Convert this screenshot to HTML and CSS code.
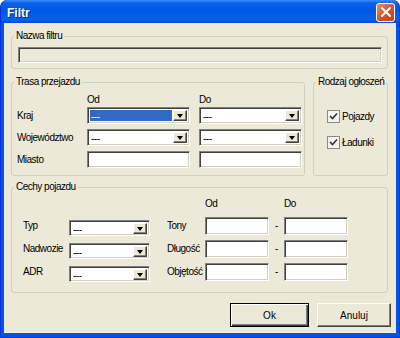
FILE: index.html
```html
<!DOCTYPE html>
<html>
<head>
    <title>Filtr</title>
    <link rel="stylesheet" href="styles.css">
</head>
<body>
    <div class="window">
        <div class="titlebar">
            <span class="title">Filtr</span>
            <button class="close" title="Zamknij">
                <svg width="10" height="10" viewBox="0 0 10 10">
                    <path d="M1 1L9 9M9 1L1 9" stroke="#fff" stroke-width="2" stroke-linecap="square"/>
                </svg>
            </button>
        </div>
        <div class="client">
            <fieldset class="group name-group">
                <legend>Nazwa filtru</legend>
                <input type="text" class="field name-field">
            </fieldset>

            <div class="middle">
                <fieldset class="group route">
                    <legend>Trasa przejazdu</legend>
                    <div class="route-grid">
                        <span></span>
                        <span class="col-head">Od</span>
                        <span class="col-head">Do</span>

                        <label class="row-label">Kraj</label>
                        <div class="field combo"><span class="value selected">---</span><span class="arrow"></span></div>
                        <div class="field combo"><span class="value">---</span><span class="arrow"></span></div>

                        <label class="row-label">Województwo</label>
                        <div class="field combo"><span class="value">---</span><span class="arrow"></span></div>
                        <div class="field combo"><span class="value">---</span><span class="arrow"></span></div>

                        <label class="row-label">Miasto</label>
                        <input type="text" class="field">
                        <input type="text" class="field">
                    </div>
                </fieldset>

                <fieldset class="group kind">
                    <legend>Rodzaj ogłoszeń</legend>
                    <div class="checks">
                        <label class="check"><span class="box"><svg width="9" height="9" viewBox="0 0 9 9"><path d="M1 4L3.5 6.5L8 1.5" stroke="#333" stroke-width="1.6" fill="none"/></svg></span>Pojazdy</label>
                        <label class="check"><span class="box"><svg width="9" height="9" viewBox="0 0 9 9"><path d="M1 4L3.5 6.5L8 1.5" stroke="#333" stroke-width="1.6" fill="none"/></svg></span>Ładunki</label>
                    </div>
                </fieldset>
            </div>

            <fieldset class="group vehicle">
                <legend>Cechy pojazdu</legend>
                <div class="vehicle-grid">
                    <span></span><span></span><span></span><span></span>
                    <span class="col-head">Od</span>
                    <span></span>
                    <span class="col-head">Do</span>

                    <label class="row-label">Typ</label>
                    <div class="field combo small"><span class="value">---</span><span class="arrow"></span></div>
                    <span></span>
                    <label class="row-label">Tony</label>
                    <input type="text" class="field">
                    <span class="dash">-</span>
                    <input type="text" class="field">

                    <label class="row-label">Nadwozie</label>
                    <div class="field combo small"><span class="value">---</span><span class="arrow"></span></div>
                    <span></span>
                    <label class="row-label">Długość</label>
                    <input type="text" class="field">
                    <span class="dash">-</span>
                    <input type="text" class="field">

                    <label class="row-label">ADR</label>
                    <div class="field combo small"><span class="value">---</span><span class="arrow"></span></div>
                    <span></span>
                    <label class="row-label">Objętość</label>
                    <input type="text" class="field">
                    <span class="dash">-</span>
                    <input type="text" class="field">
                </div>
            </fieldset>

            <div class="buttons">
                <button class="btn default">Ok</button>
                <button class="btn cancel">Anuluj</button>
            </div>
        </div>
    </div>
</body>
</html>
```

FILE: styles.css
```css
body {
    margin: 0;
    font-family: "Liberation Sans", Arial, sans-serif;
    font-size: 10px;
    letter-spacing: -0.5px;
    color: #000;
}
.window {
    width: 400px;
    height: 338px;
    box-sizing: border-box;
    display: flex;
    flex-direction: column;
    padding: 0 3px 4px 3px;
    background: #0055e5;
    border-left: 1px solid #0831d9;
    border-right: 1px solid #0831d9;
    border-bottom: 1px solid #0831d9;
    border-radius: 7px 7px 0 0;
}
.titlebar {
    height: 23px;
    margin: 0 -3px;
    padding: 0 4px 0 6px;
    display: flex;
    align-items: center;
    justify-content: space-between;
    background: linear-gradient(#3d8ff8 0, #0a62ea 3px, #0058e6 45%, #0860ec 85%, #0049d0 100%);
    border-radius: 7px 7px 0 0;
}
.title {
    color: #fff;
    font-weight: bold;
    font-size: 12px;
    letter-spacing: 0;
    padding-top: 3px;
    text-shadow: 1px 1px #0a2a8a;
}
.close {
    width: 19px;
    height: 19px;
    padding: 0;
    margin-top: 1px;
    display: flex;
    align-items: center;
    justify-content: center;
    border: 1px solid #fff;
    border-radius: 3px;
    background: linear-gradient(135deg, #ec8b66, #d2522b 55%, #c0401a);
}
.client {
    flex: 1;
    background: #ece9d8;
    padding: 7px 8px 0 7px;
    border-bottom: 1px solid #f4f2ea;
}
.group {
    margin: 0;
    padding: 0;
    min-width: 0;
    border: 1px solid #d0d0bf;
    border-radius: 3px;
}
.group legend {
    padding: 0 2px;
    margin-left: 2px;
    line-height: 12px;
}
.field {
    box-sizing: border-box;
    height: 18px;
    margin: 0;
    padding: 0;
    border: 1px solid;
    border-color: #808080 #fff #fff #808080;
    box-shadow: inset 1px 1px #404040, inset -1px -1px #d4d0c8;
    background: #fff;
    font: inherit;
}
.name-field {
    display: block;
    width: 364px;
    height: 16px;
    margin: 5px 6px 5px 6px;
    background: #ece9d8;
}
.middle {
    display: flex;
    gap: 8px;
    margin-top: 7px;
}
.route {
    width: 294px;
    box-sizing: border-box;
}
.kind {
    flex: 1;
}
.route-grid {
    display: grid;
    grid-template-columns: 61px 103px 103px;
    grid-template-rows: 8px 17px 17px 17px;
    column-gap: 9px;
    row-gap: 5px;
    padding: 6px 0 7px 5px;
}
.col-head {
    line-height: 12px;
    align-self: start;
    white-space: nowrap;
}
.row-label {
    align-self: center;
    line-height: 12px;
    white-space: nowrap;
}
.route-grid .field {
    height: 17px;
}
.combo {
    display: flex;
    align-items: stretch;
    padding: 2px;
}
.value {
    flex: 1;
    margin: 0 1px 0 0;
    padding-left: 1px;
    line-height: 13px;
}
.selected {
    background: #316ac5;
    color: #fff;
}
.arrow {
    width: 14px;
    box-sizing: border-box;
    border: 1px solid;
    border-color: #fff #404040 #404040 #fff;
    box-shadow: inset -1px -1px #808080;
    background: #ece9d8;
    display: flex;
    align-items: center;
    justify-content: center;
}
.arrow::after {
    content: "";
    border-left: 3px solid transparent;
    border-right: 3px solid transparent;
    border-top: 4px solid #000;
    margin-top: 1px;
}
.checks {
    display: flex;
    flex-direction: column;
    gap: 13px;
    padding: 22px 0 0 13px;
}
.check {
    display: flex;
    align-items: center;
    gap: 2px;
    height: 13px;
}
.box {
    width: 13px;
    height: 13px;
    box-sizing: border-box;
    border: 1px solid #8a8a8a;
    background: #f4f4f0;
    display: flex;
    align-items: center;
    justify-content: center;
}
.vehicle {
    margin-top: 5px;
}
.vehicle-grid {
    display: grid;
    grid-template-columns: 46px 81px 17px 38px 64px 15px 64px;
    grid-template-rows: 14px 18px 18px 18px;
    row-gap: 5px;
    padding: 5px 0 11px 11px;
}
.combo.small {
    height: 16px;
    margin-top: 3px;
    padding: 2px 2px 1px 2px;
}
.dash {
    text-align: center;
    align-self: center;
    line-height: 12px;
}
.buttons {
    display: flex;
    justify-content: flex-end;
    gap: 8px;
    margin: 10px -3px 0 0;
}
.btn {
    height: 24px;
    padding: 0;
    font: inherit;
    color: #000;
    background: #ece9d8;
    border: 1px solid;
    border-color: #fff #404040 #404040 #fff;
    box-shadow: inset -1px -1px #808080;
}
.btn.default {
    width: 79px;
    border-color: #000;
    box-shadow: inset 1px 1px #fff, inset -1px -1px #404040, inset -2px -2px #808080;
}
.btn.cancel {
    width: 74px;
}
```
